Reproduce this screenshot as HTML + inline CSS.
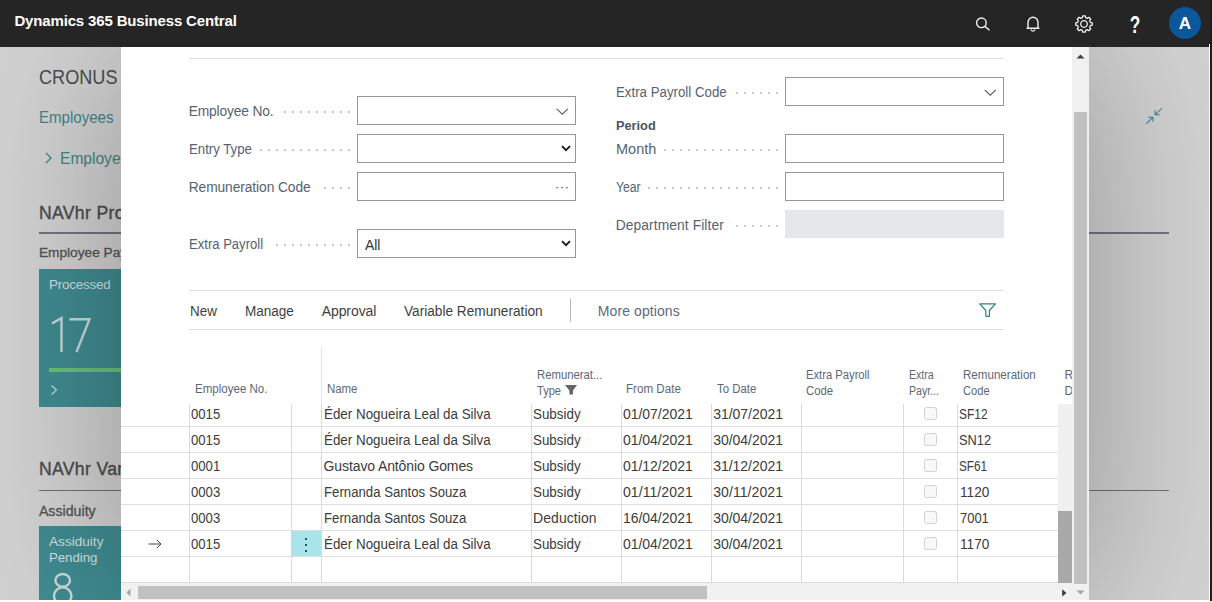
<!DOCTYPE html>
<html><head><meta charset="utf-8"><title>Dynamics 365 Business Central</title>
<style>
*{box-sizing:border-box;margin:0;padding:0}
html,body{width:1212px;height:602px;overflow:hidden;background:#fff;font-family:"Liberation Sans",sans-serif;}
#root{position:absolute;left:0;top:0;width:1212px;height:602px;overflow:hidden;background:#fff}
.abs{position:absolute}
.t{position:absolute;white-space:nowrap}
#hdr{left:0;top:0;width:1212px;height:47px;background:#252525}
#bg{left:0;top:47px;width:1209px;height:553px;overflow:hidden;background:#d3d3d3}
#shd{left:121px;top:0;width:968px;height:553px;box-shadow:0 0 160px 0 rgba(0,0,0,0.31)}
#rstrip{left:1210px;top:0;width:2px;height:601px;background:#1d1d1d}
#rline{left:1209px;top:44px;width:1px;height:556px;background:#fbfbfb}
#dlg{left:121px;top:47px;width:968px;height:553px;background:#fff;overflow:hidden}
.inp{position:absolute;height:29px;border:1px solid #969696;background:#fff}
.dots{position:absolute;height:2px;background-image:radial-gradient(circle,#c6c8cc 0.8px,transparent 1.1px);background-size:8px 2px;background-repeat:repeat-x;background-position:right center}
.hl{position:absolute;height:1px;background:#dcdee1}
.vl{position:absolute;width:1px;background:#d8dadd}
.cb{position:absolute;width:13px;height:13px;border:1px solid #d2d2d2;border-radius:2.5px;background:#f8f8f8}
svg{position:absolute;overflow:visible}
</style></head><body><div id="root">
<div id="bg" class="abs">
<div class="t" style="left:39.4px;top:17.07px;font-size:20px;line-height:26px;color:#4c4c4c;transform-origin:0 50%;transform:scaleX(0.9057);">CRONUS</div>
<div class="t" style="left:39.4px;top:59.96px;font-size:16px;line-height:21px;color:#3f8788;transform-origin:0 50%;transform:scaleX(0.9413);">Employees</div>
<div class="t" style="left:59.9px;top:100.96px;font-size:16px;line-height:21px;color:#3f8788;transform-origin:0 50%;transform:scaleX(0.9728);">Employees</div>
<svg style="left:44px;top:105px" width="10" height="12" viewBox="0 0 10 12"><path d="M2 1 L7 6 L2 11" fill="none" stroke="#3f8788" stroke-width="1.3"/></svg>
<div class="t" style="left:38.9px;top:154.90px;font-size:17.6px;line-height:23px;color:#4c4c4c;-webkit-text-stroke:0.35px #4c4c4c;letter-spacing:0.35px;">NAVhr Processing</div>
<div class="abs" style="left:39px;top:185px;width:90px;height:2px;background:#6f7682"></div>
<div class="abs" style="left:1089px;top:185px;width:80px;height:2px;background:#6f7682"></div>
<div class="t" style="left:38.9px;top:197.25px;font-size:13.7px;line-height:18px;color:#555;-webkit-text-stroke:0.3px #555;">Employee Payroll</div>
<div class="abs" style="left:39px;top:222px;width:90px;height:138px;background:#408c92"></div>
<div class="t" style="left:48.9px;top:228.86px;font-size:13.4px;line-height:17px;color:#d3e2e3;letter-spacing:-0.189px;">Processed</div>
<div class="abs" style="left:49px;top:321px;width:80px;height:4px;background:#6cc079"></div>
<svg style="left:50px;top:337px" width="8" height="12" viewBox="0 0 8 12"><path d="M1.5 1.5 L6.5 6 L1.5 10.5" fill="none" stroke="#c9d9da" stroke-width="1.2"/></svg>
<div class="t" style="left:38.9px;top:411.40px;font-size:17.6px;line-height:23px;color:#4c4c4c;-webkit-text-stroke:0.35px #4c4c4c;letter-spacing:0.35px;">NAVhr Variable</div>
<div class="abs" style="left:39px;top:443px;width:90px;height:1px;background:#6e7074"></div>
<div class="abs" style="left:1089px;top:443px;width:80px;height:1px;background:#6e7074"></div>
<div class="t" style="left:38.9px;top:454.58px;font-size:14.2px;line-height:18px;color:#555;-webkit-text-stroke:0.3px #555;">Assiduity</div>
<div class="abs" style="left:39px;top:479px;width:90px;height:80px;background:#408c92"></div>
<div class="t" style="left:48.9px;top:485.93px;font-size:13.2px;line-height:17px;color:#d3e2e3;transform-origin:0 50%;transform:scaleX(1.0318);">Assiduity</div>
<div class="t" style="left:48.9px;top:501.93px;font-size:13.2px;line-height:17px;color:#d3e2e3;letter-spacing:0.009px;">Pending</div>
<svg style="left:0;top:0" width="121" height="553" viewBox="0 47 121 553"><g fill="none" stroke="#c9d9da" stroke-width="2.4"><path d="M52 323.5 L61.5 318 V352"/><path d="M69.5 319.2 H89.5 L76.5 352"/><ellipse cx="62.7" cy="580.4" rx="7.3" ry="6.4"/><ellipse cx="62.7" cy="596" rx="8.7" ry="8.6"/></g></svg>
<svg style="left:0;top:0" width="1209" height="553" viewBox="0 47 1209 553"><g fill="none" stroke="#37888b" stroke-width="1.05"><path d="M1161.8 108.3 L1155.1 114.7 M1155.1 110.2 V114.7 H1159.8"/><path d="M1146.3 123.6 L1152.9 117.3 M1148.1 117.3 H1152.9 V121.7"/></g></svg>
<div id="shd" class="abs"></div>
</div>
<div id="hdr" class="abs">
<div class="t" style="left:14.4px;top:10.80px;font-size:15px;line-height:20px;color:#fff;font-weight:bold;letter-spacing:-0.153px;">Dynamics 365 Business Central</div>
<svg style="left:975px;top:15px" width="16" height="17" viewBox="0 0 16 17"><circle cx="6.4" cy="7.8" r="4.8" fill="none" stroke="#f0f0f0" stroke-width="1.4"/><path d="M9.9 11.4 L14.5 15.3" stroke="#f0f0f0" stroke-width="1.5"/></svg>
<svg style="left:1025.1px;top:15px" width="16" height="18" viewBox="0 0 16 18"><path d="M3 13.2 V7.4 a5 5.2 0 0 1 10 0 V13.2 M1.6 13.3 H14.4" fill="none" stroke="#f0f0f0" stroke-width="1.4"/><path d="M6.1 14.6 a1.9 1.5 0 0 0 3.8 0" fill="none" stroke="#f0f0f0" stroke-width="1.3"/></svg>
<svg style="left:1074.6px;top:15.2px" width="18" height="18" viewBox="-9 -9 18 18"><g fill="none" stroke="#f0f0f0" stroke-width="1.3"><circle r="3.3"/><path d="M-1.23 -8.21 L1.23 -8.21 L1.67 -6.28 L3.26 -5.62 L4.93 -6.68 L6.68 -4.93 L5.62 -3.26 L6.28 -1.67 L8.21 -1.23 L8.21 1.23 L6.28 1.67 L5.62 3.26 L6.68 4.93 L4.93 6.68 L3.26 5.62 L1.67 6.28 L1.23 8.21 L-1.23 8.21 L-1.67 6.28 L-3.26 5.62 L-4.93 6.68 L-6.68 4.93 L-5.62 3.26 L-6.28 1.67 L-8.21 1.23 L-8.21 -1.23 L-6.28 -1.67 L-5.62 -3.26 L-6.68 -4.93 L-4.93 -6.68 L-3.26 -5.62 L-1.67 -6.28 Z" stroke-linejoin="round"/></g></svg>
<div class="abs" style="left:1125.4px;top:12.1px;width:20px;text-align:center;color:#fff;font-weight:bold;font-size:23.5px;line-height:26px;transform:scaleX(0.73)">?</div>
<div class="abs" style="left:1169px;top:7px;width:32px;height:32px;border-radius:16px;background:#0b579b;color:#fff;font-weight:bold;font-size:17px;line-height:33px;text-align:center">A</div>
</div>
<div id="rline" class="abs"></div><div id="rstrip" class="abs"></div>
<div id="dlg" class="abs">
<div class="hl" style="left:68px;top:11px;width:815px"></div>
<div class="t" style="left:67.7px;top:56.22px;font-size:13.8px;line-height:18px;color:#566272;letter-spacing:-0.161px;">Employee No.</div>
<div class="dots" style="left:160px;top:64px;width:72px"></div>
<div class="inp" style="left:236px;top:49px;width:219px"></div>
<svg style="left:434.5px;top:60.7px" width="13" height="8" viewBox="0 0 13 8"><path d="M0.7 0.9 L6.3 6.2 L11.9 0.9" fill="none" stroke="#5a5a5a" stroke-width="1.1"/></svg>
<div class="t" style="left:67.7px;top:94.22px;font-size:13.8px;line-height:18px;color:#566272;transform-origin:0 50%;transform:scaleX(0.9572);">Entry Type</div>
<div class="dots" style="left:136px;top:102px;width:96px"></div>
<div class="inp" style="left:236px;top:87px;width:219px"></div>
<svg style="left:440px;top:98px" width="10" height="7" viewBox="0 0 10 7"><path d="M1 1.2 L5 5.2 L9 1.2" fill="none" stroke="#1a1a1a" stroke-width="1.9"/></svg>
<div class="t" style="left:67.7px;top:132.22px;font-size:13.8px;line-height:18px;color:#566272;letter-spacing:-0.094px;">Remuneration Code</div>
<div class="dots" style="left:200px;top:140px;width:32px"></div>
<div class="inp" style="left:236px;top:125px;width:219px"></div>
<div class="abs" style="left:434px;top:133px;font-size:13px;line-height:14px;color:#444;letter-spacing:0.5px">···</div>
<div class="t" style="left:67.7px;top:189.22px;font-size:13.8px;line-height:18px;color:#566272;transform-origin:0 50%;transform:scaleX(0.9473);">Extra Payroll</div>
<div class="dots" style="left:152px;top:197px;width:80px"></div>
<div class="inp" style="left:236px;top:182px;width:219px"></div>
<svg style="left:440px;top:193px" width="10" height="7" viewBox="0 0 10 7"><path d="M1 1.2 L5 5.2 L9 1.2" fill="none" stroke="#1a1a1a" stroke-width="1.9"/></svg>
<div class="t" style="left:243.9px;top:189.15px;font-size:14px;line-height:18px;color:#333;">All</div>
<div class="t" style="left:494.7px;top:37.22px;font-size:13.8px;line-height:18px;color:#566272;transform-origin:0 50%;transform:scaleX(0.9622);">Extra Payroll Code</div>
<div class="dots" style="left:612px;top:45px;width:48px"></div>
<div class="inp" style="left:664px;top:30px;width:219px"></div>
<svg style="left:862.5px;top:41.7px" width="13" height="8" viewBox="0 0 13 8"><path d="M0.7 0.9 L6.3 6.2 L11.9 0.9" fill="none" stroke="#5a5a5a" stroke-width="1.1"/></svg>
<div class="t" style="left:494.7px;top:70.02px;font-size:13.5px;line-height:18px;color:#4a5564;font-weight:bold;transform-origin:0 50%;transform:scaleX(0.9450);">Period</div>
<div class="t" style="left:494.7px;top:94.22px;font-size:13.8px;line-height:18px;color:#566272;transform-origin:0 50%;transform:scaleX(1.0507);">Month</div>
<div class="dots" style="left:540px;top:102px;width:120px"></div>
<div class="inp" style="left:664px;top:87px;width:219px"></div>
<div class="t" style="left:494.7px;top:132.22px;font-size:13.8px;line-height:18px;color:#566272;transform-origin:0 50%;transform:scaleX(0.8858);">Year</div>
<div class="dots" style="left:524px;top:140px;width:136px"></div>
<div class="inp" style="left:664px;top:125px;width:219px"></div>
<div class="t" style="left:494.7px;top:170.22px;font-size:13.8px;line-height:18px;color:#566272;letter-spacing:0.094px;">Department Filter</div>
<div class="dots" style="left:612px;top:178px;width:48px"></div>
<div class="abs" style="left:664px;top:163px;width:219px;height:28px;background:#e6e7e9"></div>
<div class="hl" style="left:68px;top:243px;width:815px"></div>
<div class="hl" style="left:68px;top:282px;width:815px"></div>
<div class="t" style="left:68.8px;top:255.15px;font-size:14px;line-height:18px;color:#3b3f45;transform-origin:0 50%;transform:scaleX(0.9569);">New</div>
<div class="t" style="left:123.9px;top:255.15px;font-size:14px;line-height:18px;color:#3b3f45;transform-origin:0 50%;transform:scaleX(0.9665);">Manage</div>
<div class="t" style="left:200.7px;top:255.15px;font-size:14px;line-height:18px;color:#3b3f45;letter-spacing:-0.079px;">Approval</div>
<div class="t" style="left:283.4px;top:255.15px;font-size:14px;line-height:18px;color:#3b3f45;transform-origin:0 50%;transform:scaleX(0.9750);">Variable Remuneration</div>
<div class="t" style="left:476.8px;top:255.15px;font-size:14px;line-height:18px;color:#5f6a79;letter-spacing:0.088px;">More options</div>
<div class="vl" style="left:449px;top:252px;height:23px;background:#b4b7bb"></div>
<svg style="left:858px;top:255px" width="17" height="17" viewBox="0 0 17 17"><path d="M0.8 1.8 H16.4 L10.4 8.5 V14.3 H6.8 V8.5 Z" fill="none" stroke="#2f8386" stroke-width="1.2" stroke-linejoin="round"/></svg>
<div class="vl" style="left:200px;top:300px;height:57px;background:#e4e5e7"></div>
<div class="t" style="left:73.5px;top:333.84px;font-size:12px;line-height:16px;color:#5d6877;transform-origin:0 50%;transform:scaleX(0.9619);">Employee No.</div>
<div class="t" style="left:205.7px;top:333.84px;font-size:12px;line-height:16px;color:#5d6877;transform-origin:0 50%;transform:scaleX(0.9497);">Name</div>
<div class="t" style="left:415.5px;top:319.84px;font-size:12px;line-height:16px;color:#5d6877;transform-origin:0 50%;transform:scaleX(0.9429);">Remunerat...</div>
<div class="t" style="left:415.5px;top:336.34px;font-size:12px;line-height:16px;color:#5d6877;transform-origin:0 50%;transform:scaleX(0.9225);">Type</div>
<svg style="left:443.9px;top:338.2px" width="12" height="10" viewBox="0 0 12 10"><path d="M0 0 H12 L7.9 5.4 V9.6 H4.4 V5.4 Z" fill="#646464"/></svg>
<div class="t" style="left:505.4px;top:333.84px;font-size:12px;line-height:16px;color:#5d6877;transform-origin:0 50%;transform:scaleX(0.9686);">From Date</div>
<div class="t" style="left:595.5px;top:333.84px;font-size:12px;line-height:16px;color:#5d6877;transform-origin:0 50%;transform:scaleX(0.9503);">To Date</div>
<div class="t" style="left:685.3px;top:319.84px;font-size:12px;line-height:16px;color:#5d6877;transform-origin:0 50%;transform:scaleX(0.9350);">Extra Payroll</div>
<div class="t" style="left:685.3px;top:336.34px;font-size:12px;line-height:16px;color:#5d6877;transform-origin:0 50%;transform:scaleX(0.9447);">Code</div>
<div class="t" style="left:787.7px;top:319.84px;font-size:12px;line-height:16px;color:#5d6877;transform-origin:0 50%;transform:scaleX(0.8819);">Extra</div>
<div class="t" style="left:787.7px;top:336.34px;font-size:12px;line-height:16px;color:#5d6877;transform-origin:0 50%;transform:scaleX(0.8820);">Payr...</div>
<div class="t" style="left:841.7px;top:319.84px;font-size:12px;line-height:16px;color:#5d6877;transform-origin:0 50%;transform:scaleX(0.9658);">Remuneration</div>
<div class="t" style="left:841.7px;top:336.34px;font-size:12px;line-height:16px;color:#5d6877;transform-origin:0 50%;transform:scaleX(0.9272);">Code</div>
<div class="t" style="left:943.6px;top:319.84px;font-size:12px;line-height:16px;color:#5d6877;">R</div>
<div class="t" style="left:943.6px;top:336.34px;font-size:12px;line-height:16px;color:#5d6877;">D</div>
<div class="abs" style="left:0;top:357px;width:951px;height:179px;overflow:hidden">
<div class="vl" style="left:68px;top:0px;height:179px"></div>
<div class="vl" style="left:170px;top:0px;height:179px"></div>
<div class="vl" style="left:200px;top:0px;height:179px"></div>
<div class="vl" style="left:410px;top:0px;height:179px"></div>
<div class="vl" style="left:500px;top:0px;height:179px"></div>
<div class="vl" style="left:590px;top:0px;height:179px"></div>
<div class="vl" style="left:680px;top:0px;height:179px"></div>
<div class="vl" style="left:782px;top:0px;height:179px"></div>
<div class="vl" style="left:836px;top:0px;height:179px"></div>
<div class="hl" style="left:0px;top:22px;width:937px"></div>
<div class="hl" style="left:0px;top:48px;width:937px"></div>
<div class="hl" style="left:0px;top:74px;width:937px"></div>
<div class="hl" style="left:0px;top:100px;width:937px"></div>
<div class="hl" style="left:0px;top:126px;width:937px"></div>
<div class="hl" style="left:0px;top:152px;width:937px"></div>
<div class="hl" style="left:0px;top:178px;width:937px"></div>
<div class="abs" style="left:170px;top:127px;width:30px;height:25px;background:#a9e4ea"></div>
<div class="abs" style="left:183.8px;top:133.8px;width:2.4px;height:2.4px;background:#22565c"></div>
<div class="abs" style="left:183.8px;top:139.8px;width:2.4px;height:2.4px;background:#22565c"></div>
<div class="abs" style="left:183.8px;top:145.8px;width:2.4px;height:2.4px;background:#22565c"></div>
<svg style="left:27px;top:135px" width="14" height="10" viewBox="0 0 14 10"><path d="M0.5 5 H13 M8.8 0.8 L13 5 L8.8 9.2" fill="none" stroke="#444" stroke-width="1"/></svg>
<div class="t" style="left:70.3px;top:1.35px;font-size:14px;line-height:18px;color:#3c3c3c;transform-origin:0 50%;transform:scaleX(0.9376);">0015</div>
<div class="t" style="left:202.6px;top:1.35px;font-size:14px;line-height:18px;color:#3c3c3c;transform-origin:0 50%;transform:scaleX(0.9562);">Éder Nogueira Leal da Silva</div>
<div class="t" style="left:412.1px;top:1.35px;font-size:14px;line-height:18px;color:#3c3c3c;transform-origin:0 50%;transform:scaleX(0.9557);">Subsidy</div>
<div class="t" style="left:502.0px;top:1.35px;font-size:14px;line-height:18px;color:#3c3c3c;letter-spacing:-0.041px;">01/07/2021</div>
<div class="t" style="left:592.2px;top:1.35px;font-size:14px;line-height:18px;color:#3c3c3c;letter-spacing:-0.030px;">31/07/2021</div>
<div class="t" style="left:838.3px;top:1.35px;font-size:14px;line-height:18px;color:#3c3c3c;transform-origin:0 50%;transform:scaleX(0.8547);">SF12</div>
<div class="cb" style="left:803px;top:3px"></div>
<div class="t" style="left:70.3px;top:27.35px;font-size:14px;line-height:18px;color:#3c3c3c;transform-origin:0 50%;transform:scaleX(0.9376);">0015</div>
<div class="t" style="left:202.6px;top:27.35px;font-size:14px;line-height:18px;color:#3c3c3c;transform-origin:0 50%;transform:scaleX(0.9562);">Éder Nogueira Leal da Silva</div>
<div class="t" style="left:412.1px;top:27.35px;font-size:14px;line-height:18px;color:#3c3c3c;transform-origin:0 50%;transform:scaleX(0.9557);">Subsidy</div>
<div class="t" style="left:502.0px;top:27.35px;font-size:14px;line-height:18px;color:#3c3c3c;letter-spacing:-0.041px;">01/04/2021</div>
<div class="t" style="left:592.2px;top:27.35px;font-size:14px;line-height:18px;color:#3c3c3c;letter-spacing:-0.030px;">30/04/2021</div>
<div class="t" style="left:838.3px;top:27.35px;font-size:14px;line-height:18px;color:#3c3c3c;transform-origin:0 50%;transform:scaleX(0.9137);">SN12</div>
<div class="cb" style="left:803px;top:29px"></div>
<div class="t" style="left:70.3px;top:53.35px;font-size:14px;line-height:18px;color:#3c3c3c;transform-origin:0 50%;transform:scaleX(0.9376);">0001</div>
<div class="t" style="left:202.6px;top:53.35px;font-size:14px;line-height:18px;color:#3c3c3c;letter-spacing:-0.113px;">Gustavo Antônio Gomes</div>
<div class="t" style="left:412.1px;top:53.35px;font-size:14px;line-height:18px;color:#3c3c3c;transform-origin:0 50%;transform:scaleX(0.9557);">Subsidy</div>
<div class="t" style="left:502.0px;top:53.35px;font-size:14px;line-height:18px;color:#3c3c3c;letter-spacing:-0.041px;">01/12/2021</div>
<div class="t" style="left:592.2px;top:53.35px;font-size:14px;line-height:18px;color:#3c3c3c;letter-spacing:-0.030px;">31/12/2021</div>
<div class="t" style="left:838.3px;top:53.35px;font-size:14px;line-height:18px;color:#3c3c3c;transform-origin:0 50%;transform:scaleX(0.8398);">SF61</div>
<div class="cb" style="left:803px;top:55px"></div>
<div class="t" style="left:70.3px;top:79.35px;font-size:14px;line-height:18px;color:#3c3c3c;transform-origin:0 50%;transform:scaleX(0.9376);">0003</div>
<div class="t" style="left:202.6px;top:79.35px;font-size:14px;line-height:18px;color:#3c3c3c;transform-origin:0 50%;transform:scaleX(0.9424);">Fernanda Santos Souza</div>
<div class="t" style="left:412.1px;top:79.35px;font-size:14px;line-height:18px;color:#3c3c3c;transform-origin:0 50%;transform:scaleX(0.9557);">Subsidy</div>
<div class="t" style="left:502.0px;top:79.35px;font-size:14px;line-height:18px;color:#3c3c3c;letter-spacing:0.074px;">01/11/2021</div>
<div class="t" style="left:592.2px;top:79.35px;font-size:14px;line-height:18px;color:#3c3c3c;letter-spacing:0.086px;">30/11/2021</div>
<div class="t" style="left:838.9px;top:79.35px;font-size:14px;line-height:18px;color:#3c3c3c;transform-origin:0 50%;transform:scaleX(0.9732);">1120</div>
<div class="cb" style="left:803px;top:81px"></div>
<div class="t" style="left:70.3px;top:105.35px;font-size:14px;line-height:18px;color:#3c3c3c;transform-origin:0 50%;transform:scaleX(0.9376);">0003</div>
<div class="t" style="left:202.6px;top:105.35px;font-size:14px;line-height:18px;color:#3c3c3c;transform-origin:0 50%;transform:scaleX(0.9424);">Fernanda Santos Souza</div>
<div class="t" style="left:412.1px;top:105.35px;font-size:14px;line-height:18px;color:#3c3c3c;letter-spacing:0.057px;">Deduction</div>
<div class="t" style="left:502.0px;top:105.35px;font-size:14px;line-height:18px;color:#3c3c3c;letter-spacing:-0.041px;">16/04/2021</div>
<div class="t" style="left:592.2px;top:105.35px;font-size:14px;line-height:18px;color:#3c3c3c;letter-spacing:-0.030px;">30/04/2021</div>
<div class="t" style="left:838.9px;top:105.35px;font-size:14px;line-height:18px;color:#3c3c3c;transform-origin:0 50%;transform:scaleX(0.9247);">7001</div>
<div class="cb" style="left:803px;top:107px"></div>
<div class="t" style="left:70.3px;top:131.35px;font-size:14px;line-height:18px;color:#3c3c3c;transform-origin:0 50%;transform:scaleX(0.9376);">0015</div>
<div class="t" style="left:202.6px;top:131.35px;font-size:14px;line-height:18px;color:#3c3c3c;transform-origin:0 50%;transform:scaleX(0.9562);">Éder Nogueira Leal da Silva</div>
<div class="t" style="left:412.1px;top:131.35px;font-size:14px;line-height:18px;color:#3c3c3c;transform-origin:0 50%;transform:scaleX(0.9557);">Subsidy</div>
<div class="t" style="left:502.0px;top:131.35px;font-size:14px;line-height:18px;color:#3c3c3c;letter-spacing:-0.041px;">01/04/2021</div>
<div class="t" style="left:592.2px;top:131.35px;font-size:14px;line-height:18px;color:#3c3c3c;letter-spacing:-0.030px;">30/04/2021</div>
<div class="t" style="left:838.9px;top:131.35px;font-size:14px;line-height:18px;color:#3c3c3c;transform-origin:0 50%;transform:scaleX(0.9732);">1170</div>
<div class="cb" style="left:803px;top:133px"></div>
<div class="abs" style="left:937px;top:0;width:14px;height:179px;background:#f0f0f0"></div>
<div class="abs" style="left:937px;top:107px;width:14px;height:72px;background:#a8a8a8"></div>
</div>
<div class="abs" style="left:0;top:536px;width:951px;height:17px;background:#f1f1f1"></div>
<div class="abs" style="left:17px;top:539px;width:569px;height:13px;background:#c1c1c1"></div>
<svg style="left:5px;top:541px" width="5" height="9" viewBox="0 0 5 9"><path d="M4.5 0.5 V8.5 L0.5 4.5 Z" fill="#a3a3a3"/></svg>
<svg style="left:940.8px;top:541.8px" width="5" height="8" viewBox="0 0 5 8"><path d="M0.2 0.2 V7.6 L4.4 3.9 Z" fill="#3a3a3a"/></svg>
<div class="abs" style="left:951px;top:0;width:17px;height:553px;background:#f1f1f1"></div>
<div class="abs" style="left:953px;top:65px;width:13px;height:472px;background:#c1c1c1"></div>
<svg style="left:955.3px;top:6.5px" width="9" height="5" viewBox="0 0 9 5"><path d="M0.5 4.5 H8.5 L4.5 0.5 Z" fill="#404040"/></svg>
<svg style="left:955px;top:543px" width="9" height="5" viewBox="0 0 9 5"><path d="M0.5 0.5 H8.5 L4.5 4.5 Z" fill="#a3a3a3"/></svg>
</div>
</div></body></html>
